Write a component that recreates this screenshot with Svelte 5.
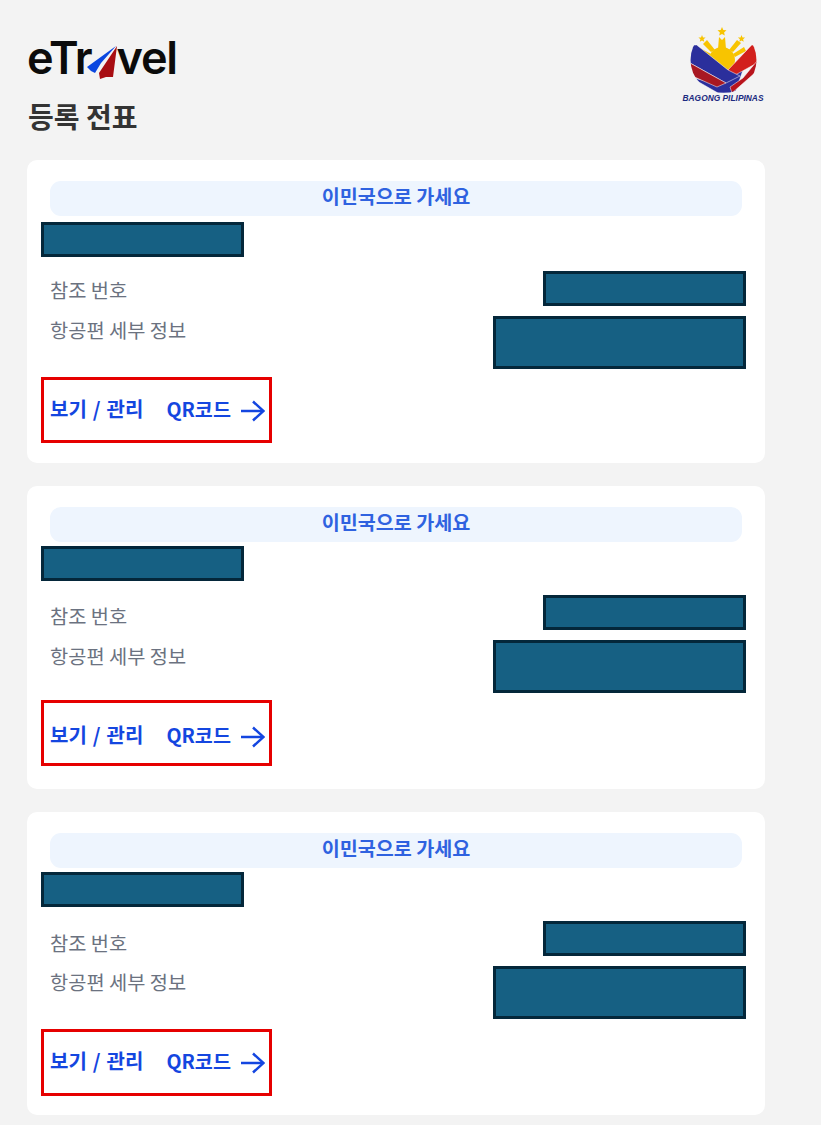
<script lang="ts">
    // small per-card differences in spacing from the reference
    const cards = [
        { nameGap: 6, refShift: 0, flightShift: 0, actionGap: 8, actionHeight: 66, actionShift: 0 },
        { nameGap: 4, refShift: 2, flightShift: 2, actionGap: 7, actionHeight: 66, actionShift: 6 },
        { nameGap: 4, refShift: 3, flightShift: 2, actionGap: 10, actionHeight: 67, actionShift: 0 }
    ];
</script>

<style>
    :global(body) {
        background: #f3f3f3;
    }

    .page {
        width: 821px;
        height: 1125px;
        box-sizing: border-box;
        padding: 27px 56px 0 27px;
        overflow: hidden;
        font-family: "Noto Sans CJK KR", "Noto Sans", sans-serif;
    }

    .header {
        display: flex;
        justify-content: space-between;
        align-items: flex-start;
        height: 133px;
    }

    .brand-name {
        display: flex;
        align-items: flex-start;
        height: 66px;
        padding-top: 3px;
        font-family: Inter, "Noto Sans", sans-serif;
        font-size: 45px;
        font-weight: 600;
        letter-spacing: -1.2px;
        line-height: 56px;
        color: #0b0b0b;
    }

    .brand-name svg {
        margin: 16px -1px 0 -5px;
    }

    h1 {
        margin: 0 0 0 1px;
        font-size: 28px;
        font-weight: 700;
        line-height: 40px;
        color: #333;
    }

    .seal {
        display: flex;
        flex-direction: column;
        align-items: center;
        width: 86px;
        margin: 0 -1px 0 0;
    }

    .seal span {
        margin-top: 1px;
        font-family: "Liberation Sans", sans-serif;
        font-size: 8.4px;
        font-weight: 700;
        font-style: italic;
        line-height: 9px;
        white-space: nowrap;
        color: #1b2a80;
    }

    .card {
        height: 303px;
        box-sizing: border-box;
        margin-bottom: 23px;
        padding: 21px 23px 0;
        border-radius: 10px;
        background: #fff;
    }

    .status {
        height: 35px;
        border-radius: 11px;
        background: #eef5fe;
        font-size: 19.6px;
        font-weight: 700;
        line-height: 29px;
        text-align: center;
        color: #2f62e0;
    }

    .redacted {
        box-sizing: border-box;
        border: 3px solid #04273a;
        background: #166083;
    }

    .name {
        width: 203px;
        height: 35px;
        margin-left: -9px;
    }

    .row {
        display: flex;
        justify-content: space-between;
        margin-right: -4px;
        font-size: 19.8px;
        color: #6b7280;
    }

    .row-ref {
        height: 38px;
        margin-top: 14px;
        line-height: 38px;
    }

    .row-flight {
        margin-top: 7px;
        line-height: 28px;
    }

    .ref {
        width: 203px;
        height: 35px;
    }

    .flight {
        width: 253px;
        height: 53px;
    }

    .actions {
        display: flex;
        align-items: center;
        width: 231px;
        box-sizing: border-box;
        margin-left: -9px;
        padding: 0 0 4px 6px;
        border: 3px solid #e60000;
        font-size: 20px;
        font-weight: 700;
        color: #1446e0;
    }

    .actions a {
        display: flex;
        align-items: center;
        color: inherit;
        text-decoration: none;
    }

    .manage {
        margin-right: 23px;
        word-spacing: 1.5px;
    }

    .qr {
        font-size: 19.6px;
    }

    .qr svg {
        margin: 5px 0 0 10px;
    }
</style>

<div class="page">
    <header class="header">
        <div class="brand">
            <div class="brand-name">
                <span>eTr</span>
                <svg width="31" height="34" viewBox="0 0 31 34">
                    <path d="M0 21 L29 0 L14 17 L8 27 L4 25 Z" fill="#0b47e0" />
                    <path d="M30 0 L26 31 L19 31 L13 33 L12 27 Z" fill="#a80d12" />
                </svg>
                <span>vel</span>
            </div>
            <h1>등록 전표</h1>
        </div>
        <div class="seal">
            <svg width="67" height="66" viewBox="0 0 67 66">
                <defs>
                    <clipPath id="globe">
                        <circle cx="33.500" cy="33" r="33" />
                    </clipPath>
                </defs>
                <g fill="#f8c400">
                    <path d="M32 0l1.300 3 3.200.3-2.400 2.100.7 3.100-2.800-1.600-2.800 1.600.7-3.100-2.400-2.100 3.200-.3z" />
                    <path d="M12 8l1 2.400 2.600.2-2 1.700.6 2.500-2.200-1.300-2.200 1.300.6-2.500-2-1.700 2.600-.2z" />
                    <path d="M51.500 8l1 2.400 2.600.2-2 1.700.6 2.500-2.200-1.300-2.200 1.300.6-2.500-2-1.700 2.600-.2z" />
                    <circle cx="32" cy="33" r="13" />
                    <path d="M28 22 L29 10 L32 13 L35 10 L36 22 Z" />
                    <path d="M21 25 L13 17 L17 13 L25 23 Z" />
                    <path d="M43 25 L51 16 L47 13 L39 23 Z" />
                    <path d="M19 30 L8 25 L10 21 L21 27 Z" />
                    <path d="M45 30 L56 24 L54 20 L43 27 Z" />
                </g>
                <g clip-path="url(#globe)" stroke="#fff" stroke-width="0.500">
                    <path d="M0 50 L28 66 L45 66 L54 40 L20 55 Z" fill="#2b2f9c" />
                    <path d="M61.700 18 L67 18 L67 36 L38 52 L27 50 L38 43 Z" fill="#d2201c" />
                    <path d="M67 34 L67 44 L42 66 L40 60 L53 51 Z" fill="#b8141c" />
                    <path d="M0 18 L6.700 18 L38 43 L50 49 L36 56 L0 36 Z" fill="#2b2f9c" />
                    <path d="M0 36 L36 56 L27 60 L0 48 Z" fill="#a81822" />
                </g>
            </svg>
            <span>BAGONG PILIPINAS</span>
        </div>
    </header>

    {#each cards as card}
        <section class="card">
            <div class="status">이민국으로 가세요</div>
            <div class="redacted name" style="margin-top: {card.nameGap}px"></div>
            <div class="row row-ref">
                <span style="padding-top: {card.refShift}px">참조 번호</span>
                <div class="redacted ref"></div>
            </div>
            <div class="row row-flight">
                <span style="padding-top: {card.flightShift}px">항공편 세부 정보</span>
                <div class="redacted flight"></div>
            </div>
            <div class="actions" style="margin-top: {card.actionGap}px; height: {card.actionHeight}px; padding-top: {card.actionShift}px">
                <a class="manage" href="#manage">보기 / 관리</a>
                <a class="qr" href="#qr">
                    QR코드
                    <svg width="24" height="22" viewBox="0 0 24 22" fill="none" stroke="#1446e0" stroke-width="2.500">
                        <path d="M0 11 H22" />
                        <path d="M12 1.500 L22.500 11 L12 20.500" />
                    </svg>
                </a>
            </div>
        </section>
    {/each}
</div>
